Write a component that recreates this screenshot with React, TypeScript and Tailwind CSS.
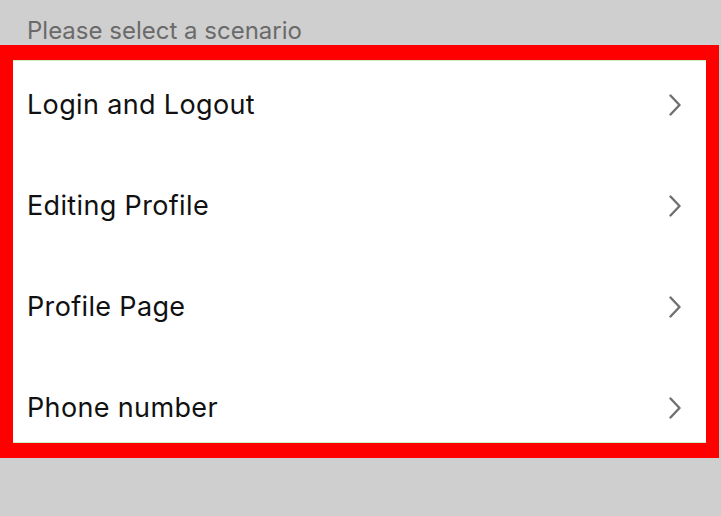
import React from "react";

const scenarios = ["Login and Logout", "Editing Profile", "Profile Page", "Phone number"];

const Chevron = () => (
  <svg width="12" height="22" viewBox="0 0 12 22" fill="none" className="shrink-0">
    <path d="M1.5 1.5 L10.5 11 L1.5 20.5" stroke="#707070" strokeWidth="2.4" strokeLinecap="round" strokeLinejoin="round" />
  </svg>
);

export default function App() {
  return (
    <div className="w-[721px] h-[516px] bg-[#cfcfcf] overflow-hidden" style={{ fontFamily: "Inter, 'Liberation Sans', sans-serif" }}>
      {/* section caption */}
      <div className="h-[45px] flex items-center pl-[27px] pt-[16px]">
        <span className="text-[24px] leading-none text-[#6a6a6a]">Please select a scenario</span>
      </div>

      {/* highlighted list */}
      <div className="w-[719px] bg-[#ff0000] pl-[13px] pr-[13px] pt-[15px] pb-[15px]">
        <div className="h-[383px] bg-white overflow-hidden border-t border-b border-[#c9eec0]">
          {scenarios.map((s) => (
            <div key={s} className="h-[101px] flex items-start justify-between pl-[14px] pr-[25px] pt-[28px]">
              <span className="text-[27px] leading-[32px] tracking-[0.35px] text-[#111]">{s}</span>
              <div className="pt-[5px]">
                <Chevron />
              </div>
            </div>
          ))}
        </div>
      </div>
    </div>
  );
}
